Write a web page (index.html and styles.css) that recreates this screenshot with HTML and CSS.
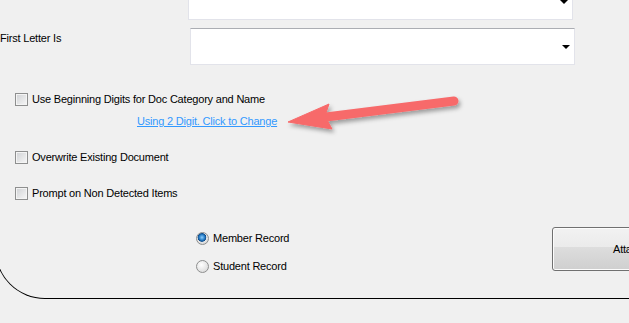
FILE: index.html
```html
<!DOCTYPE html>
<html lang="en">
<head>
  <meta charset="UTF-8">
  <title>Import Options</title>
  <link rel="stylesheet" href="styles.css">
</head>
<body>

<div class="panel">
  <div class="row first">
    <div class="combo combo-top"><span class="drop"></span></div>
  </div>

  <div class="row letter">
    <label class="caption">First Letter Is</label>
    <div class="combo"><span class="drop"></span></div>
  </div>

  <div class="check digits">
    <span class="box"></span>
    <span>Use Beginning Digits for Doc Category and Name</span>
  </div>
  <a class="link" href="#">Using 2 Digit. Click to Change</a>

  <div class="check overwrite">
    <span class="box"></span>
    <span>Overwrite Existing Document</span>
  </div>

  <div class="check prompt">
    <span class="box"></span>
    <span>Prompt on Non Detected Items</span>
  </div>

  <div class="records">
    <div class="radios">
      <div class="radio on"><span class="dot"></span><span>Member Record</span></div>
      <div class="radio"><span class="dot"></span><span>Student Record</span></div>
    </div>
    <button class="btn">Attach</button>
  </div>
</div>

<!-- annotation arrow drawn over the form -->
<svg class="arrow" width="629" height="323" viewBox="0 0 629 323">
  <defs>
    <filter id="shade" x="-20%" y="-50%" width="140%" height="200%">
      <feDropShadow dx="2" dy="3" stdDeviation="2" flood-color="#000" flood-opacity="0.35"/>
    </filter>
  </defs>
  <g filter="url(#shade)" fill="#f76a6b" stroke="#f76a6b">
    <line x1="454" y1="101" x2="326" y2="117" stroke-width="9" stroke-linecap="round"/>
    <polygon points="288,122 329,104 325,116 332,129" stroke-width="1" stroke-linejoin="round"/>
  </g>
</svg>

</body>
</html>
```

FILE: styles.css
```css
body {
  margin: 0;
  background-color: #f0f0f0;
  font-family: 'Liberation Sans', Arial, sans-serif;
  font-size: 11px;
  letter-spacing: -0.2px;
  color: #000;
  overflow: hidden;
  height: 323px;
  position: relative;
}

.panel {
  margin: -40px -60px 0 -5px;
  height: 339px;
  border: 1px solid #000;
  border-top: none;
  border-radius: 0 0 0 50px;
  padding-left: 4px;
  box-sizing: border-box;
}

.row {
  display: flex;
  align-items: flex-start;
}

.first {
  padding-top: 23px;
  padding-left: 190px;
}

.letter {
  margin-top: 8px;
}

.caption {
  width: 190px;
  flex-shrink: 0;
  margin-top: 4px;
  line-height: 13px;
}

.combo {
  width: 385px;
  height: 37px;
  flex-shrink: 0;
  box-sizing: border-box;
  background-color: #fff;
  border: 1px solid #e2e3ea;
  border-top-color: #abadb3;
  position: relative;
}

.combo-top {
  margin-left: -2px;
}

.drop {
  position: absolute;
  right: 4px;
  top: 50%;
  margin-top: -2px;
  width: 0;
  height: 0;
  border-left: 4px solid transparent;
  border-right: 4px solid transparent;
  border-top: 4px solid #000;
}

.check {
  display: flex;
  align-items: center;
  gap: 4px;
  padding-left: 15px;
  line-height: 13px;
}

.digits { margin-top: 28px; }
.overwrite { margin-top: 23px; }
.prompt { margin-top: 23px; }

.box {
  width: 13px;
  height: 13px;
  box-sizing: border-box;
  border: 1px solid #8e8f8f;
  background: linear-gradient(135deg, #cfd1d4, #f7f7f7);
  box-shadow: inset 0 0 0 1px #f4f4f4;
}

.link {
  display: block;
  margin: 9px 0 0 137px;
  color: #3399ff;
  line-height: 13px;
}

.records {
  display: flex;
  align-items: flex-start;
  margin-top: 27px;
}

.radios {
  width: 552px;
  flex-shrink: 0;
  box-sizing: border-box;
  padding-left: 196px;
  padding-top: 5px;
  display: flex;
  flex-direction: column;
  gap: 15px;
  white-space: nowrap;
}

.radio {
  display: flex;
  align-items: center;
  gap: 4px;
  line-height: 13px;
}

.dot {
  width: 13px;
  height: 13px;
  box-sizing: border-box;
  border-radius: 50%;
  border: 1px solid #8e8f8f;
  background: radial-gradient(circle at 40% 35%, #ffffff, #d2d2d2);
}

.radio.on .dot {
  background: radial-gradient(circle at 45% 40%, #8fd0ff 0, #2a7fc7 30%, #0d4c8c 45%, #e6e6e6 52%, #c9c9c9 100%);
}

.btn {
  width: 152px;
  height: 44px;
  flex-shrink: 0;
  border: 1px solid #707070;
  border-radius: 3px;
  background: linear-gradient(#f2f2f2 0, #ebebeb 45%, #dddddd 46%, #cfcfcf 100%);
  box-shadow: inset 0 0 0 1px #fcfcfc;
  font-family: 'Liberation Sans', Arial, sans-serif;
  font-size: 11px;
  letter-spacing: -0.2px;
  color: #000;
}

.arrow {
  position: absolute;
  left: 0;
  top: 0;
  pointer-events: none;
}
```
